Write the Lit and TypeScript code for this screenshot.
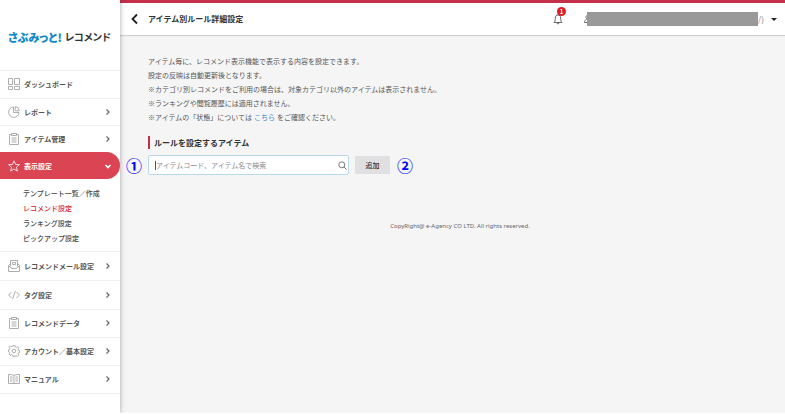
import { LitElement, html, css, svg, nothing } from "lit";
import { customElement, property, state } from "lit/decorators.js";
import { classMap } from "lit/directives/class-map.js";

const icons: Record<string, unknown> = {
  dashboard: svg`<path d="M.5.5h4v6h-4zM6.500.5h5v6h-5zM.5 8.500h4v3h-4zM6.500 8.500h5v3h-5z"/>`,
  report: svg`<path d="M5.500 1a5.200 5.200 0 1 0 5.500 5.500H5.500z"/><path d="M7.200.6v4.200h4.200A4.800 4.800 0 0 0 7.200.6z"/>`,
  clipboard: svg`<path d="M3.500 1.500h-2v10h9v-10h-2M3.500.5h5v2h-5zM3.500 5h5M3.500 7h5M3.500 9h5"/>`,
  star: svg`<path d="M6 .8l1.500 3.600 3.900.3-3 2.500 1 3.900L6 9l-3.400 2.100 1-3.900-3-2.500 3.900-.3z"/>`,
  mail: svg`<path d="M2.500 6.500v-6h7v6M2.500 3.500l-2 2v6h11v-6l-2-2M.5 6l3.500 2.500h4L11.500 6M4.500 2.500h3v2h-3z"/>`,
  code: svg`<path d="M3.500 3L.6 6l2.900 3M8.500 3l2.900 3-2.900 3M7.300 2L4.700 10"/>`,
  gear: svg`<circle cx="6" cy="6" r="1.800"/><path d="M5 .6h2l.4 1.500 1 .4 1.300-.8 1.300 1.400-.8 1.300.4 1 1 .3v1.700l-1.200.4-.4 1 .7 1.300-1.300 1.300-1.300-.8-1 .4L7 11.400H5l-.4-1.400-1-.4-1.300.8L1 9l.7-1.300-.4-1-1-.3V5l1.200-.4.4-1L1.100 2.300 2.400 1l1.300.8 1-.4z"/>`,
  book: svg`<path d="M6 2.500c-1.500-1-3.500-1-5.500-1v9h11v-9c-2 0-4 0-5.500 1zM6 2.500v8M2 4h2.500M2 6h2.500M2 8h2.500M7.500 4H10M7.500 6H10M7.500 8H10"/>`,
};

interface Item {
  icon: string;
  label: string;
  leaf?: boolean;
  active?: boolean;
}

const UPPER: Item[] = [
  { icon: "dashboard", label: "ダッシュボード", leaf: true },
  { icon: "report", label: "レポート" },
  { icon: "clipboard", label: "アイテム管理" },
  { icon: "star", label: "表示設定", active: true },
];
const SUB = ["テンプレート一覧／作成", "レコメンド設定", "ランキング設定", "ピックアップ設定"];
const LOWER: Item[] = [
  { icon: "mail", label: "レコメンドメール設定" },
  { icon: "code", label: "タグ設定" },
  { icon: "clipboard", label: "レコメンドデータ" },
  { icon: "gear", label: "アカウント／基本設定" },
  { icon: "book", label: "マニュアル" },
];

@customElement("side-nav")
export class SideNav extends LitElement {
  @property() current = "レコメンド設定";

  static styles = css`
    :host {
      display: block;
      background: #fff;
      box-shadow: 0 0 5px rgba(0, 0, 0, 0.35);
    }
    .logo {
      display: flex;
      align-items: center;
      gap: 3px;
      height: 70px;
      padding: 3px 0 0 8px;
      box-sizing: border-box;
      font-size: 11px;
      font-weight: 700;
      font-feature-settings: "palt";
      color: #333;
      text-decoration: none;
      white-space: nowrap;
    }
    .brand {
      color: #1087c9;
      font-weight: 900;
    }
    .name {
      font-size: 10px;
    }
    ul {
      list-style: none;
      margin: 0;
      padding: 0;
    }
    .row {
      display: flex;
      align-items: center;
      height: 27px;
      padding: 0 8px 1px;
      box-sizing: border-box;
      border-top: 1px solid #f0f0f0;
      color: #555;
      font-weight: 700;
      text-decoration: none;
    }
    .tall {
      height: 28px;
    }
    .lower .row {
      height: 28px;
    }
    .lower .tall {
      height: 29px;
    }
    .lower {
      border-bottom: 1px solid #f0f0f0;
    }
    .icon {
      width: 12px;
      height: 12px;
      margin-right: 4px;
      fill: none;
      stroke: #999;
      stroke-width: 0.8;
    }
    .label {
      flex: 1;
      white-space: nowrap;
    }
    .arrow {
      width: 8px;
      height: 8px;
      fill: none;
      stroke: #666;
      stroke-width: 1.2;
    }
    .active {
      background: #da4453;
      border-color: #da4453;
      border-radius: 0 14px 14px 0;
      color: #fff;
    }
    .active .icon {
      stroke: #fff;
    }
    .active .arrow {
      stroke: #fff;
      stroke-width: 1.6;
    }
    .sub {
      padding: 7px 0 5px 23px;
    }
    .link {
      display: block;
      line-height: 15px;
      color: #444;
      font-weight: 500;
      text-decoration: none;
      white-space: nowrap;
    }
    .current {
      color: #d8232f;
    }
  `;

  private row(item: Item, tall: boolean) {
    return html`<li>
      <a href="#" class=${classMap({ row: true, tall, active: !!item.active })}>
        <svg class="icon" viewBox="0 0 12 12" aria-hidden="true">${icons[item.icon]}</svg>
        <span class="label">${item.label}</span>
        ${item.leaf
          ? nothing
          : html`<svg class="arrow" viewBox="0 0 8 8" aria-hidden="true">
              <path d=${item.active ? "M1.500 3L4 5.500 6.500 3" : "M2.500 1.500L5 4 2.500 6.500"} />
            </svg>`}
      </a>
    </li>`;
  }

  render() {
    return html`
      <a class="logo" href="#"><span class="brand">さぶみっと!</span><span class="name">レコメンド</span></a>
      <nav>
        <ul>
          ${UPPER.map((item, i) => this.row(item, i === 0))}
        </ul>
        <ul class="sub">
          ${SUB.map(
            (label) => html`<li>
              <a href="#" class=${classMap({ link: true, current: label === this.current })}>${label}</a>
            </li>`
          )}
        </ul>
        <ul class="lower">
          ${LOWER.map((item, i) => this.row(item, i < 2))}
        </ul>
      </nav>
    `;
  }
}

@customElement("page-header")
export class PageHeader extends LitElement {
  @property() heading = "";
  @property({ type: Number }) notices = 0;

  static styles = css`
    :host {
      display: flex;
      align-items: center;
      height: 35px;
      box-sizing: border-box;
      padding: 0 7px 0 10px;
      border-top: 3px solid #c4304a;
      background: #fff;
      box-shadow: 0 1px 1px rgba(0, 0, 0, 0.15);
    }
    button {
      display: flex;
      align-items: center;
      border: 0;
      padding: 0;
      background: none;
      font: inherit;
      color: #777;
    }
    svg {
      fill: none;
      stroke: #222;
    }
    .back svg {
      width: 10px;
      height: 12px;
      stroke-width: 1.8;
    }
    h1 {
      flex: 1;
      margin: 0 0 0 8px;
      font-size: 8px;
      line-height: 12px;
      font-weight: 700;
      color: #333;
    }
    .bell {
      position: relative;
      margin-right: 21px;
    }
    .bell svg {
      width: 10px;
      height: 12px;
      stroke: #666;
    }
    .badge {
      position: absolute;
      left: 4px;
      top: -6px;
      width: 9px;
      height: 9px;
      border-radius: 50%;
      background: #e01b22;
      color: #fff;
      font-size: 6px;
      line-height: 9px;
      font-weight: 700;
      text-align: center;
    }
    .person {
      width: 3px;
      height: 10px;
    }
    .person path {
      stroke: #666;
    }
    .mask {
      width: 171px;
      height: 14px;
      background: #999;
    }
    .rest {
      width: 12px;
      text-align: left;
      font-size: 8px;
    }
    .caret {
      width: 8px;
      height: 8px;
    }
    .caret path {
      fill: #222;
      stroke: none;
    }
  `;

  render() {
    return html`
      <button class="back" aria-label="戻る">
        <svg viewBox="0 0 10 12"><path d="M7 1.500L2.500 6 7 10.500" /></svg>
      </button>
      <h1>${this.heading}</h1>
      <button class="bell" aria-label="お知らせ">
        <svg viewBox="0 0 10 12">
          <path d="M1 9.500h8c-1-1-1.300-2-1.300-4.500C7.700 3 6.500 2 5 2S2.300 3 2.300 5C2.300 7.500 2 8.500 1 9.500zM4 10c.2 1.300 1.800 1.300 2 0M5 1v1" />
        </svg>
        <span class="badge">${this.notices}</span>
      </button>
      <button class="account" aria-label="アカウント">
        <svg class="person" viewBox="0 0 3 10"><path d="M3 1.500C1.500 2 1.500 4.500 3 5M2.500 5.500C1 6 .5 7 .5 8.500H3" /></svg>
        <span class="mask"></span>
        <span class="rest">/)</span>
        <svg class="caret" viewBox="0 0 8 8"><path d="M1 3h6L4 6z" /></svg>
      </button>
    `;
  }
}

@customElement("app-root")
export class AppRoot extends LitElement {
  @state() private query = "";

  static styles = css`
    :host {
      display: grid;
      grid-template-columns: 120px 1fr;
      min-height: calc(100vh - 1px);
      background: #f5f5f5;
      color: #555;
      font: 7px/14px "Noto Sans CJK JP", sans-serif;
    }
    side-nav {
      position: relative;
      z-index: 1;
    }
    .content {
      padding: 19px 13px 0 28px;
    }
    p {
      margin: 0;
    }
    .intro a {
      color: #3f86cf;
      text-decoration: none;
      margin: 0 2px;
    }
    h2 {
      margin: 12px 0 6px;
      padding-left: 4px;
      border-left: 2px solid #c4304a;
      font-size: 8px;
      line-height: 13px;
      font-weight: 700;
      color: #333;
    }
    form {
      position: relative;
      display: flex;
      align-items: center;
      gap: 6px;
    }
    .mark {
      color: #00f;
      font-size: 16px;
      line-height: 20px;
      font-weight: 700;
    }
    .before {
      position: absolute;
      left: -22px;
      top: 0;
    }
    .field {
      display: flex;
      align-items: center;
      width: 201px;
      height: 20px;
      box-sizing: border-box;
      padding: 0 1px 0 6px;
      border: 1px solid #b9d9ea;
      border-radius: 2px;
      background: #fff;
    }
    .cursor {
      width: 1px;
      height: 9px;
      background: #555;
    }
    input {
      flex: 1;
      min-width: 0;
      border: 0;
      padding: 0;
      outline: 0;
      background: none;
      font: inherit;
      color: #444;
    }
    input::placeholder {
      color: #8c8c8c;
    }
    .lens {
      width: 9px;
      height: 9px;
      fill: none;
      stroke: #777;
    }
    .add {
      width: 35px;
      height: 18px;
      margin-right: 1px;
      padding: 0;
      border: 0;
      border-radius: 1px;
      background: #e0e0e2;
      color: #333;
      font: inherit;
      font-weight: 500;
    }
    footer {
      margin-top: 44px;
      font: 6px/14px "Noto Sans", sans-serif;
      text-align: center;
      color: #666;
    }
  `;

  private onInput(e: Event) {
    this.query = (e.target as HTMLInputElement).value;
  }

  render() {
    return html`
      <side-nav></side-nav>
      <div>
        <page-header heading="アイテム別ルール詳細設定" notices="1"></page-header>
        <main class="content">
          <div class="intro">
            <p>アイテム毎に、レコメンド表示機能で表示する内容を設定できます。</p>
            <p>設定の反映は自動更新後となります。</p>
            <p>※カテゴリ別レコメンドをご利用の場合は、対象カテゴリ以外のアイテムは表示されません。</p>
            <p>※ランキングや閲覧履歴には適用されません。</p>
            <p>※アイテムの「状態」については<a href="#">こちら</a>をご確認ください。</p>
          </div>
          <h2>ルールを設定するアイテム</h2>
          <form @submit=${(e: Event) => e.preventDefault()}>
            <span class="mark before">①</span>
            <label class="field">
              <span class="cursor"></span>
              <input
                type="text"
                aria-label="ルールを設定するアイテム"
                placeholder="アイテムコード、アイテム名で検索"
                .value=${this.query}
                @input=${this.onInput}
              />
              <svg class="lens" viewBox="0 0 9 9" aria-hidden="true"><circle cx="3.800" cy="3.800" r="3" /><path d="M6 6L8.500 8.500" /></svg>
            </label>
            <button class="add">追加</button>
            <span class="mark">②</span>
          </form>
          <footer>CopyRight@ e-Agency CO LTD. All rights reserved.</footer>
        </main>
      </div>
    `;
  }
}
